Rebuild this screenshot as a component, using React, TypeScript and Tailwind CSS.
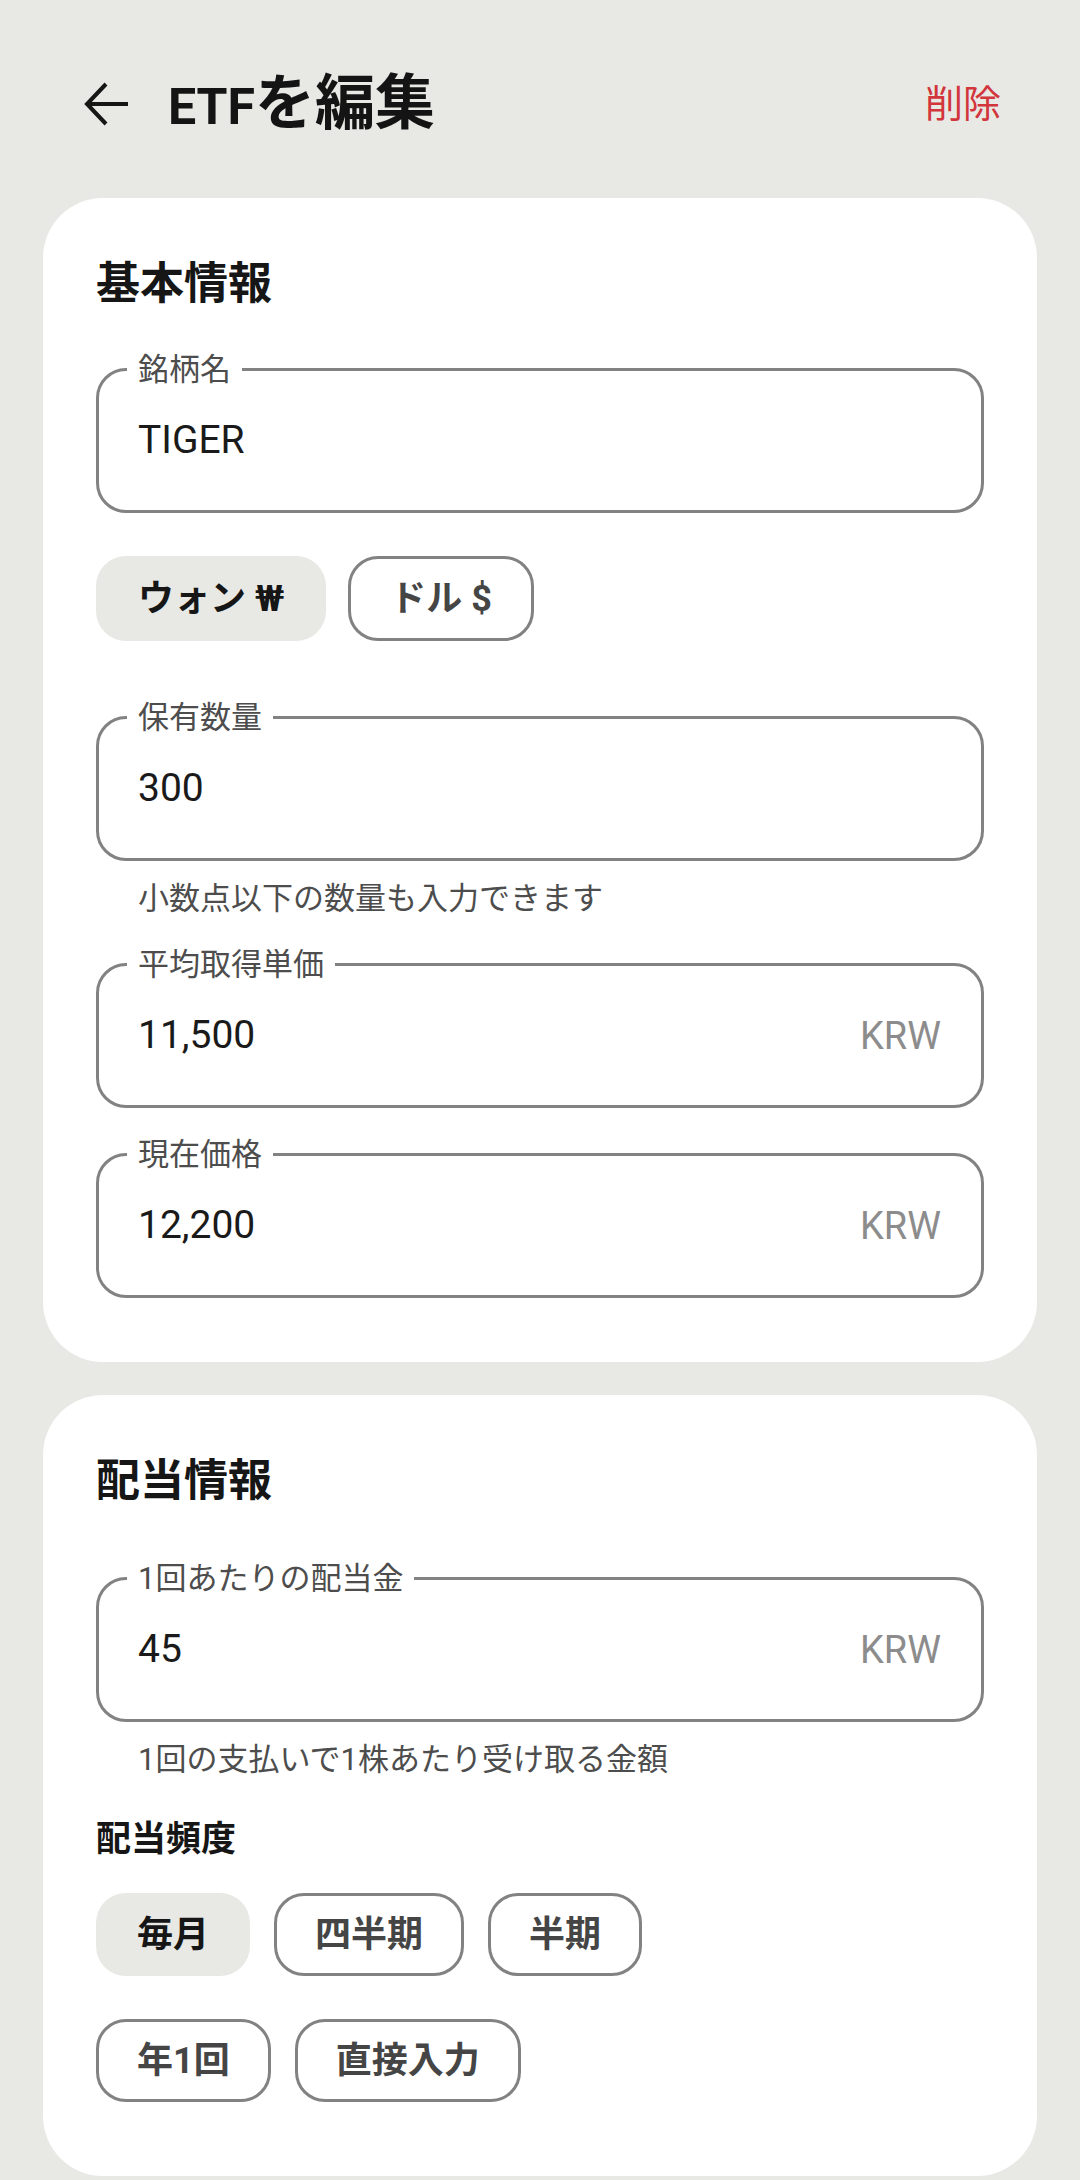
import React from "react";

function BackArrow() {
  return (
    <svg width="46" height="46" viewBox="0 0 46 46" fill="none" className="ml-[40px] shrink-0">
      <path d="M4 23H45M23 3L4 23L23 43" stroke="#161616" strokeWidth="4" />
    </svg>
  );
}

function Field({ label, value, suffix, className = "" }: { label: string; value: string; suffix?: string; className?: string }) {
  return (
    <div className={`relative flex h-[145px] items-center rounded-[30px] border-[3px] border-[#828282] pl-[39px] pr-[40px] ${className}`}>
      <span className="absolute left-[28px] top-[-17px] bg-white px-[11px] text-[31px] leading-[31px] text-[#4d4d4d]">{label}</span>
      <span className="flex-1 text-[39px] leading-none text-[#1a1a1a]">{value}</span>
      {suffix && <span className="text-[38px] leading-none text-[#8c8c8c]">{suffix}</span>}
    </div>
  );
}

function Chip({ label, selected, className = "" }: { label: string; selected?: boolean; className?: string }) {
  return (
    <div
      className={
        selected
          ? `flex items-center rounded-[30px] border-[3px] border-transparent bg-[#e8e9e5] text-[36px] font-bold leading-none text-[#161616] ${className}`
          : `flex items-center rounded-[30px] border-[3px] border-[#828282] bg-white text-[36px] font-bold leading-none text-[#454545] ${className}`
      }
    >
      {label}
    </div>
  );
}

export default function App() {
  return (
    <div className="min-h-[2180px] bg-[#e8e9e5] px-[43px] pt-[16px] font-[Roboto,'Noto_Sans_CJK_JP',sans-serif]">
      <header className="flex h-[176px] items-center">
        <BackArrow />
        <h1 className="ml-[39px] text-[60px] font-bold leading-none text-[#141414]">
          <span className="text-[50px]">ETF</span>を編集
        </h1>
        <button className="ml-auto mr-[36px] text-[38px] leading-none text-[#d2353b]">削除</button>
      </header>

      <section className="mt-[6px] rounded-[60px] bg-white px-[53px] pb-[64px] pt-[64px]">
        <h2 className="text-[44px] font-bold leading-[44px] text-[#161616]">基本情報</h2>
        <Field className="mt-[62px]" label="銘柄名" value="TIGER" />

        <div className="mt-[43px] flex gap-[22px]">
          <Chip label="ウォン ₩" selected className="h-[85px] px-[39px]" />
          <Chip label="ドル $" className="h-[85px] px-[39px]" />
        </div>

        <Field className="mt-[75px]" label="保有数量" value="300" />
        <p className="mt-[22px] pl-[42px] text-[31px] leading-[31px] text-[#4d4d4d]">小数点以下の数量も入力できます</p>

        <Field className="mt-[49px]" label="平均取得単価" value="11,500" suffix="KRW" />
        <Field className="mt-[45px]" label="現在価格" value="12,200" suffix="KRW" />
      </section>

      <section className="mt-[33px] rounded-[60px] bg-white px-[53px] pb-[74px] pt-[64px]">
        <h2 className="text-[44px] font-bold leading-[44px] text-[#161616]">配当情報</h2>
        <Field className="mt-[74px]" label="1回あたりの配当金" value="45" suffix="KRW" />
        <p className="mt-[22px] pl-[42px] text-[31px] leading-[31px] text-[#4d4d4d]">1回の支払いで1株あたり受け取る金額</p>

        <h3 className="mt-[47px] text-[35px] font-bold leading-[35px] text-[#161616]">配当頻度</h3>
        <div className="mt-[36px] flex gap-x-[24px]">
          <Chip label="毎月" selected className="h-[83px] px-[38px]" />
          <Chip label="四半期" className="h-[83px] px-[38px]" />
          <Chip label="半期" className="h-[83px] px-[38px]" />
        </div>
        <div className="mt-[43px] flex gap-x-[24px]">
          <Chip label="年1回" className="h-[83px] px-[38px]" />
          <Chip label="直接入力" className="h-[83px] px-[38px]" />
        </div>
      </section>
    </div>
  );
}
